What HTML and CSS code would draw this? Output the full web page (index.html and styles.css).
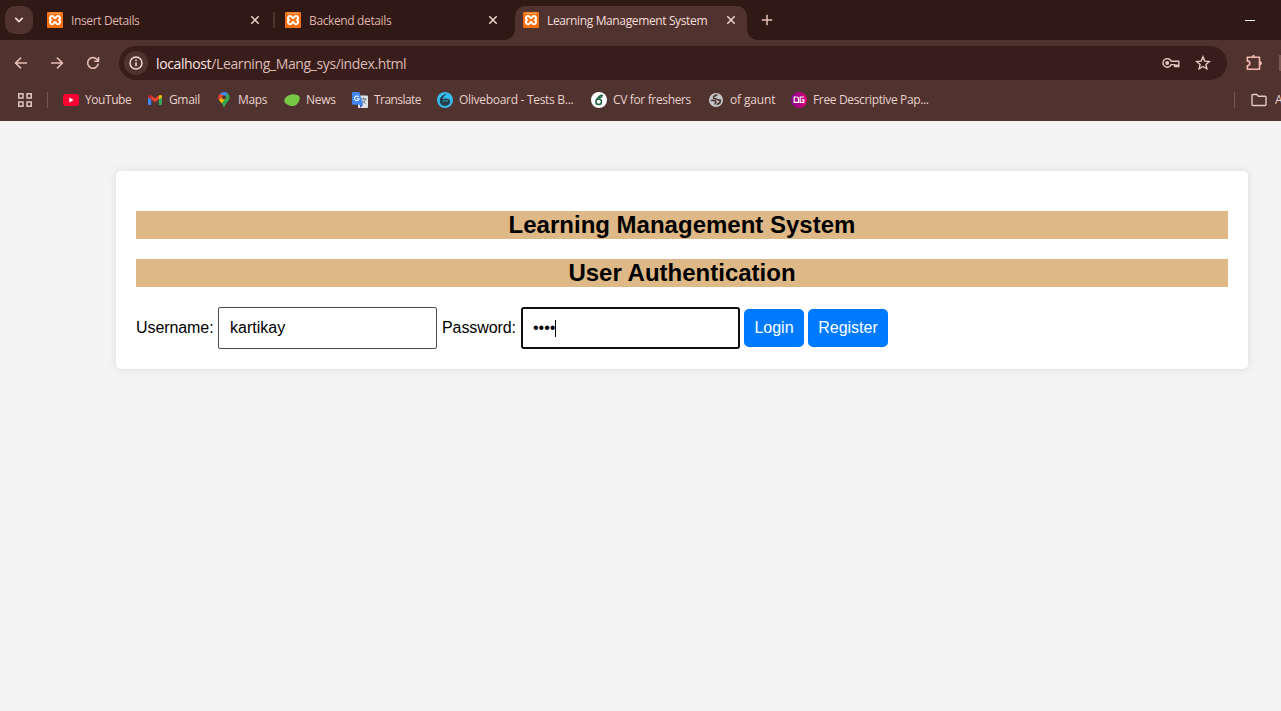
FILE: index.html
```html
<!DOCTYPE html>
<html lang="en">
<head>
<meta charset="utf-8">
<title>Learning Management System</title>
<link rel="stylesheet" href="styles.css">
</head>
<body>
<svg width="0" height="0" class="defs">
  <symbol id="xampp" viewBox="0 0 16 16">
    <rect width="16" height="16" rx="1" fill="#f4700f"/>
    <path d="M2 1.200h12" stroke="#fbc79b" stroke-width=".7"/>
    <path d="M5.300 4C6.800 4 7 6.300 8 6.300S9.200 4 10.700 4C13.500 4 13.600 7 12.100 8.100 13.600 9.200 13.500 12.300 10.700 12.300 9.200 12.300 9 10 8 10S6.800 12.300 5.300 12.300C2.500 12.300 2.400 9.200 3.900 8.100 2.400 7 2.500 4 5.300 4z" fill="none" stroke="#fff" stroke-width="2"/>
  </symbol>
  <symbol id="close" viewBox="0 0 10 10"><path d="M1.300 1.300l7.400 7.400M8.700 1.300L1.300 8.700" fill="none" stroke="currentColor" stroke-width="1.500"/></symbol>
</svg>

<header class="browser">
  <div class="tabs">
    <div class="tab-search"><svg width="10" height="8" viewBox="0 0 10 8"><path d="M1.300 1.800L5 5.500l3.700-3.700" fill="none" stroke="#f3dcd9" stroke-width="1.700"/></svg></div>
    <div class="tab first"><svg class="fav"><use href="#xampp"/></svg><span class="t1">Insert Details</span><svg class="close"><use href="#close"/></svg></div>
    <div class="tab divided"><svg class="fav"><use href="#xampp"/></svg><span class="t2">Backend details</span><svg class="close"><use href="#close"/></svg></div>
    <div class="tab active"><svg class="fav"><use href="#xampp"/></svg><span class="t3">Learning Management System</span><svg class="close"><use href="#close"/></svg></div>
    <svg class="plus" width="12" height="12" viewBox="0 0 12 12"><path d="M6 .8v10.400M.8 6h10.400" stroke="#e7bdb6" stroke-width="1.500"/></svg>
    <i class="minimize"></i>
  </div>

  <div class="toolbar">
    <div class="nav">
      <svg viewBox="0 0 16 16"><path d="M14 8H3M8 2.600L2.600 8 8 13.400" /></svg>
      <svg viewBox="0 0 16 16"><path d="M2 8h11M8 2.600L13.400 8 8 13.400"/></svg>
      <svg viewBox="0 0 16 16"><path d="M13.200 8.600A5.300 5.300 0 1 1 11.800 4.300L13.300 5.800M13.500 2v4.200H9.300"/></svg>
    </div>
    <div class="omnibox">
      <span class="info"><svg width="14" height="14" viewBox="0 0 14 14"><circle cx="7" cy="7" r="6" fill="none" stroke="#f3dcd9" stroke-width="1.400"/><path d="M7 6.200v4M7 3.500v1.500" stroke="#f3dcd9" stroke-width="1.500"/></svg></span>
      <span class="url"><b>localhost</b>/Learning_Mang_sys/index.html</span>
      <svg class="key" width="18" height="12" viewBox="0 0 18 12"><path d="M9.200 4.200A4.300 4.300 0 1 0 9.200 7.600H12.600V9.600h4.200V4.200z" fill="none" stroke="#e4c5c1" stroke-width="1.400"/><circle cx="5.200" cy="5.900" r="2" fill="#e4c5c1"/><path d="M13 8.300h3.500" stroke="#e4c5c1" stroke-width="1.500"/></svg>
      <svg class="star" width="16" height="16" viewBox="0 0 16 16"><path d="M8 1.900l1.800 4.200 4.500.4-3.400 3 1 4.400L8 11.500l-3.900 2.400 1-4.400-3.400-3 4.500-.4z" fill="none" stroke="#e7c9c5" stroke-width="1.400"/></svg>
    </div>
    <svg class="ext" width="18" height="18" viewBox="0 0 18 18"><path d="M2.300 3.300h12.200v12H2.300v-3.600c3.400-.3 3.400-4.500 0-4.800z" fill="none" stroke="#f2b8ae" stroke-width="1.600" stroke-linejoin="round"/><path d="M6.600 2.800a1.800 1.800 0 0 1 3.600 0zM15 7.300a2 2 0 0 1 0 4z" fill="#f2b8ae"/></svg>
    <i class="edge"></i>
  </div>

  <div class="bookmarks">
    <svg class="apps" width="14" height="14" viewBox="0 0 14 14"><path d="M.75.75h4.200v4.200H.75zM9.050.75h4.200v4.200h-4.200zM.75 9.050h4.200v4.200H.75zM9.050 9.050h4.200v4.200h-4.200z" fill="none" stroke="#dec5c1" stroke-width="1.500"/></svg>
    <i class="bar"></i>
    <div class="list">
      <a><svg viewBox="0 0 16 16"><rect y="2" width="16" height="12" rx="3" fill="#ff0033"/><path d="M6.300 5.400L10.700 8l-4.400 2.600z" fill="#fff"/></svg><span class="b1">YouTube</span></a>
      <a><svg viewBox="0 0 16 16"><path d="M1 4.300l3.200 2.300V13H2a1 1 0 0 1-1-1z" fill="#4285f4"/><path d="M15 4.300l-3.200 2.300V13H14a1 1 0 0 0 1-1z" fill="#34a853"/><path d="M4.200 3.500L8 6.500l3.800-3v3.800L8 10.200 4.200 7.300z" fill="#ea4335"/><path d="M1 4.500c0-1.800 1.700-2 3.200-1v3.800L1 5.500z" fill="#c5221f"/><path d="M15 4.500c0-1.800-1.700-2-3.200-1v3.800L15 5.500z" fill="#fbbc04"/></svg><span class="b2">Gmail</span></a>
      <a><svg viewBox="0 0 16 16"><path d="M8 0a5.600 5.600 0 0 0-4.300 2L8 5.500l3.500-4.200A5.500 5.500 0 0 0 8 0z" fill="#4285f4"/><path d="M3.700 2A5.600 5.600 0 0 0 3.200 8.500L8 3.600z" fill="#ea4335"/><path d="M11.300 1.200c3 2 2.800 5.200 1 7.600-2 2.700-3.300 4-4.300 7-.7-2-1.300-3.300-2.400-4.600z" fill="#34a853"/><path d="M3 8l2.600 3.200 4.200-4.600L8 3.600z" fill="#fbbc04"/><path d="M8 0c1.700 0 2.800.6 3.600 1.500L8 6z" fill="#4285f4"/><circle cx="8" cy="5.600" r="2" fill="#55332f"/></svg><span class="b3">Maps</span></a>
      <a><svg viewBox="0 0 16 16"><path d="M.3 8.500C1 4.500 6 2 10.500 2.400 14.500 2.500 16.200 4 15.600 7.200 15 11 12 14.300 8 14 4.500 13.600 0 11.500.3 8.500z" fill="#77c843"/></svg><span class="b4">News</span></a>
      <a><svg viewBox="0 0 16 16"><rect x="6" y="3.500" width="10" height="12.500" rx="1" fill="#dfe3e5"/><path d="M8.500 7h6M11.500 5.500V7M13.500 7c-.5 2-1.500 3.200-3.200 4.200M10 8.500c.8 1.400 2 2.300 3.500 3" stroke="#64757d" fill="none"/><path d="M1 0h6.300L11 12.800H1.300A1.300 1.300 0 0 1 0 11.500V1a1 1 0 0 1 1-1z" fill="#4285f4"/><path d="M7.800 12.800H11L8.500 16z" fill="#2855b5"/><path d="M6.600 4.900A2.300 2.300 0 1 0 7 6.800H4.800" fill="none" stroke="#fff" stroke-width="1.100"/></svg><span class="b5">Translate</span></a>
      <a><svg viewBox="0 0 16 16"><circle cx="8" cy="8" r="8" fill="#35bdf0"/><path d="M10.500 1.500C6 2.500 2.800 5 2.800 8.700c0 3.300 2.200 5.200 5.200 5.200s5.200-1.900 5.200-4.400c0-2.200-2.400-3.200-5.200-3-1.200.1-2 .6-2.400 1.200.2-2.600 2-4.600 4.900-6.200z" fill="#263d46"/><path d="M5.400 9.300c1.700-.6 3.800-.7 5.700-.2" stroke="#35bdf0" stroke-width=".8" fill="none"/></svg><span class="b6">Oliveboard - Tests B...</span></a>
      <a><svg viewBox="0 0 16 16"><circle cx="8" cy="8" r="8" fill="#fff"/><circle cx="7.700" cy="9.700" r="2.800" fill="none" stroke="#1c6040" stroke-width="1.500"/><path d="M5.200 8.500C6 5.500 8 5.500 8.400 4M8 5.600c1.500.3 3-.7 3.400-2.200-1.600-.5-3 .3-3.400 2.200z" fill="none" stroke="#1c6040" stroke-width="1.300"/></svg><span class="b7">CV for freshers</span></a>
      <a><svg viewBox="0 0 16 16"><circle cx="8" cy="8" r="7" fill="#c3c7cb"/><path d="M9.300 2.800C7.500 3.500 5.300 4 5.600 5.700 6 7.200 8 6.400 8.800 7.300 9.700 8.500 11.500 7.800 12.900 8.100M3 8.300c2.200.2 4.300 0 4.800 1 .4 1-.9 1.600-.6 3.400M12.300 8.500c.2 1.800-1.500 3.300-3.600 4" fill="none" stroke="#513530" stroke-width="1.700"/></svg><span class="b8">of gaunt</span></a>
      <a><svg viewBox="0 0 16 16"><defs><linearGradient id="dg"><stop offset="0" stop-color="#7d078d"/><stop offset="1" stop-color="#e3007c"/></linearGradient></defs><circle cx="8" cy="8" r="8" fill="url(#dg)"/><path d="M3.200 5h2.300q2 0 2 2v3.300H3.200zM13 5H9.200v5.300h3.600V7.800h-2" fill="none" stroke="#fff" stroke-width="1.200"/></svg><span class="b9">Free Descriptive Pap...</span></a>
    </div>
    <i class="bar"></i>
    <svg class="folder" width="16" height="14" viewBox="0 0 16 14"><path d="M1 2.500a1 1 0 0 1 1-1h3.800l1.600 1.700H14a1 1 0 0 1 1 1v7.300a1 1 0 0 1-1 1H2a1 1 0 0 1-1-1z" fill="none" stroke="#e3cac6" stroke-width="1.400"/></svg>
    <span class="all">A</span>
  </div>
</header>

<main class="container">
  <h2>Learning Management System</h2>
  <h2>User Authentication</h2>
  <form class="login">
    <label class="user">Username:</label>
    <div class="field">kartikay</div>
    <label class="pass">Password:</label>
    <div class="field focus">••••<i class="caret"></i></div>
    <button type="button" class="enter">Login</button>
    <button type="button" class="register">Register</button>
  </form>
</main>
</body>
</html>
```
FILE: styles.css
```css
* { box-sizing: border-box; }
html, body { height: 100%; }
body { margin: 0; background: #f4f4f4; font-family: "Liberation Sans", Arial, sans-serif; overflow: hidden; }
svg { display: block; flex: none; }
i { flex: none; }
.defs { position: absolute; }

/* Browser frame */
.browser { height: 121px; overflow: hidden; background: #50332f; font: 12px/16px "Open Sans", "Noto Sans", sans-serif; color: #e8d0cc; white-space: nowrap; }
.tabs { height: 40px; display: flex; align-items: center; background: #301814; padding-left: 5px; }
.tab-search { width: 28px; height: 28px; border-radius: 10px; background: #50332f; display: flex; align-items: center; justify-content: center; margin-right: 6px; }
.tab { width: 235px; height: 34px; flex: none; margin-top: 6px; padding: 0 14px 6px 8px; display: flex; align-items: center; color: #deb4ac; position: relative; }
.tab span { padding-top: 1px; }
.tab.divided { margin-left: 3px; }
.tab.divided::before { content: ""; position: absolute; left: -4px; top: 6px; width: 2px; height: 16px; background: #50332f; }
.tab.active { margin-left: 3px; width: 232px; padding-right: 11px; background: #50332f; border-radius: 10px 10px 0 0; color: #f6deda; }
.tab.active::before, .tab.active::after { content: ""; position: absolute; bottom: 0; width: 10px; height: 10px; }
.tab.active::before { left: -10px; background: radial-gradient(circle at 0 0, transparent 9.500px, #50332f 10px); }
.tab.active::after { right: -10px; background: radial-gradient(circle at 100% 0, transparent 9.500px, #50332f 10px); }
.t1, .t2, .t3 { letter-spacing: -.37px; }
.fav { width: 16px; height: 16px; margin-right: 8px; }
.close { width: 10px; height: 10px; margin-left: auto; color: #f0d5d0; }
.plus { margin-left: 14px; }
.minimize { width: 10px; height: 1px; background: #fff; margin: 0 26px 0 auto; }

.toolbar { height: 46px; display: flex; align-items: center; }
.nav { display: flex; gap: 20px; padding-left: 13px; margin-right: 18px; }
.nav svg { width: 16px; height: 16px; fill: none; stroke: #e7bdb6; stroke-width: 1.600; }
.omnibox { width: 1108px; height: 34px; flex: none; border-radius: 17px; background: #391d1a; display: flex; align-items: center; padding: 0 16px 0 5px; }
.info { width: 24px; height: 24px; border-radius: 50%; background: #50332f; display: flex; align-items: center; justify-content: center; margin-right: 8px; }
.url { font-size: 14px; line-height: 20px; letter-spacing: -.38px; padding-top: 1px; color: #dcbbb6; }
.url b { font-weight: 400; color: #f8e5e2; }
.key { margin-left: auto; }
.star { margin-left: 15px; }
.ext { margin-left: 18px; }
.edge { width: 2px; height: 16px; background: #795851; margin-left: auto; }

.bookmarks { height: 28px; display: flex; align-items: center; padding-left: 18px; }
.bar { width: 1px; height: 16px; background: #7b5751; }
.apps + .bar { margin: 0 15px 0 15px; }
.list { display: grid; grid-template-columns: 84px 69px 68px 68px 85px 154px 117px 83px 140px; width: 1171px; flex: none; }
.list a { display: flex; align-items: center; gap: 6px; }
.list svg { width: 16px; height: 16px; }
.b1 { letter-spacing: -.43px; }
.b2, .b3 { letter-spacing: -.35px; }
.b4 { letter-spacing: -.3px; }
.b5 { letter-spacing: -.55px; }
.b6 { letter-spacing: -.29px; }
.b7, .b9 { letter-spacing: -.35px; }
.b8 { letter-spacing: -.15px; }
.folder { margin: 0 8px 0 16px; }
.all { width: 6px; overflow: hidden; }

/* Page content */
.container { margin: 50px 33px 0 116px; height: 198px; padding: 20px; background: #fff; border-radius: 5px; box-shadow: 0 0 10px rgba(0,0,0,.1); }
h2 { margin: 20px 0; height: 28px; font-size: 24px; line-height: 28px; text-align: center; background: #deb887; color: #000; }
.login { height: 42px; display: flex; align-items: center; font-size: 16px; white-space: nowrap; }
.user { width: 82px; letter-spacing: -.08px; }
.pass { width: 79px; margin-left: 5px; letter-spacing: -.08px; }
.field { width: 219px; height: 42px; border: 1px solid #4b4b4b; border-radius: 2px; padding: 0 11px; line-height: 40px; display: flex; align-items: center; }
.field.focus { border: 2px solid #101010; border-radius: 3px; padding: 0 10px; }
.caret { width: 1px; height: 17px; background: #000; }
button { height: 38px; border: 0; border-radius: 5px; padding: 0; background: #007bff; color: #fff; font: 16px "Liberation Sans", Arial, sans-serif; margin-left: 4px; }
.enter { width: 60px; }
.register { width: 80px; }
```
